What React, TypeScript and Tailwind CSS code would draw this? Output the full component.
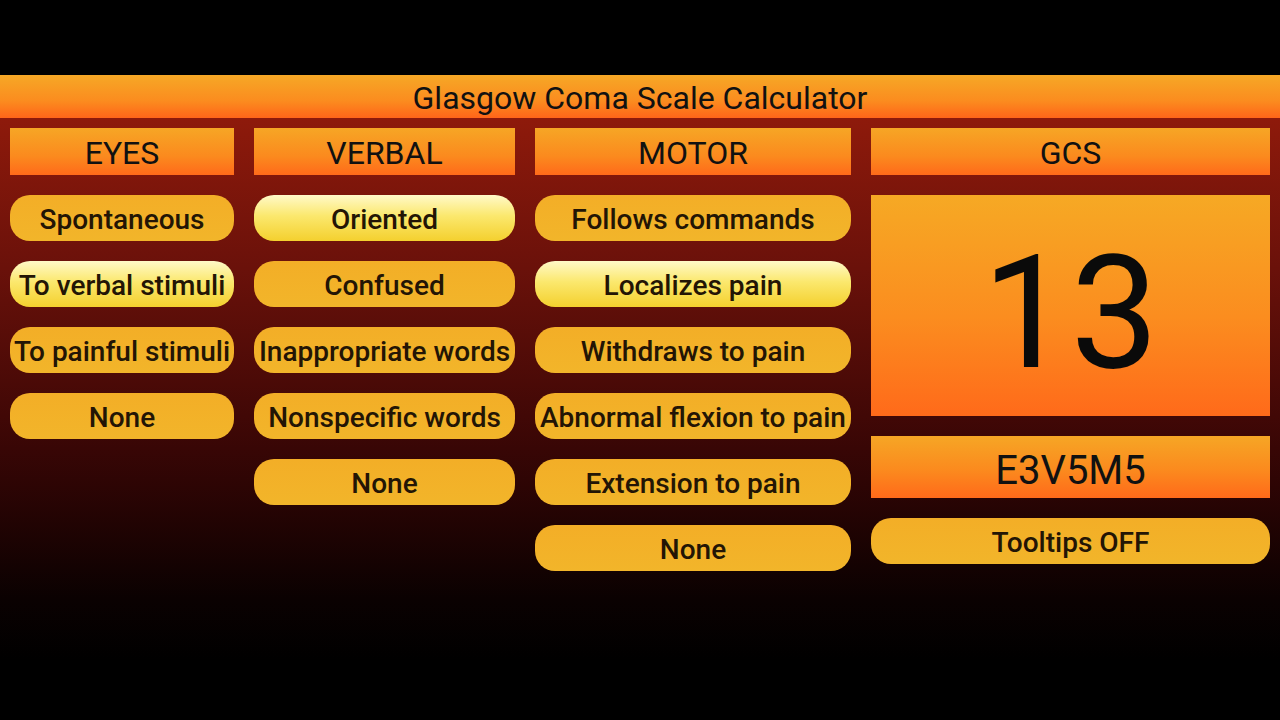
import React from "react";

const font = { fontFamily: "Roboto, 'Noto Sans', sans-serif" };

function Header({ children }: { children: React.ReactNode }) {
  return (
    <div className="h-[47px] flex items-center justify-center bg-[linear-gradient(to_bottom,#f6a625,#fb8a1e_60%,#ff6a1a)] text-[32px] text-[#111] leading-none pt-[2px]">
      {children}
    </div>
  );
}

function Btn({ label, selected }: { label: string; selected?: boolean }) {
  return (
    <div
      className={
        "h-[46px] rounded-[20px] flex items-center justify-center whitespace-nowrap text-[28px] font-medium text-[#231505] leading-none pt-[3px] " +
        (selected
          ? "bg-[linear-gradient(to_bottom,#fff9c8,#fbe86e_45%,#f4d02e)]"
          : "bg-[linear-gradient(to_bottom,#f3ae27,#f2b52a)]")
      }
    >
      {label}
    </div>
  );
}

export default function App() {
  const eyes = ["Spontaneous", "To verbal stimuli", "To painful stimuli", "None"];
  const verbal = ["Oriented", "Confused", "Inappropriate words", "Nonspecific words", "None"];
  const motor = [
    "Follows commands",
    "Localizes pain",
    "Withdraws to pain",
    "Abnormal flexion to pain",
    "Extension to pain",
    "None",
  ];
  return (
    <div className="w-[1280px] h-[720px] bg-black flex flex-col overflow-hidden" style={font}>
      <div className="h-[75px] shrink-0 bg-black" />
      <div className="h-[43px] shrink-0 flex items-center justify-center bg-[linear-gradient(to_bottom,#f6a826,#fb8c1f_60%,#ff6519)] text-[32px] text-[#111] leading-none pt-[2px]">
        Glasgow Coma Scale Calculator
      </div>
      <div className="flex-1 flex gap-[20px] px-[10px] pt-[10px] bg-[linear-gradient(to_bottom,#8e1a0b_0%,#6a110a_25%,#380605_55%,#0a0101_80%,#000_90%)]">
        <div className="w-[224px] flex flex-col gap-[20px]">
          <Header>EYES</Header>
          {eyes.map((e, i) => (
            <Btn key={e} label={e} selected={i === 1} />
          ))}
        </div>
        <div className="w-[261px] flex flex-col gap-[20px]">
          <Header>VERBAL</Header>
          {verbal.map((e, i) => (
            <Btn key={e} label={e} selected={i === 0} />
          ))}
        </div>
        <div className="w-[316px] flex flex-col gap-[20px]">
          <Header>MOTOR</Header>
          {motor.map((e, i) => (
            <Btn key={e} label={e} selected={i === 1} />
          ))}
        </div>
        <div className="w-[399px] flex flex-col gap-[20px]">
          <Header>GCS</Header>
          <div className="h-[221px] flex items-center justify-center bg-[linear-gradient(to_bottom,#f6a924,#fb8d1f_55%,#ff6a1a)] text-[157px] text-[#0a0a0a] leading-none pt-[16px]">
            13
          </div>
          <div className="h-[62px] flex items-center justify-center bg-[linear-gradient(to_bottom,#f6a625,#fb8a1e_55%,#ff6a1a)] text-[40px] text-[#111] leading-none pt-[7px]">
            E3V5M5
          </div>
          <Btn label="Tooltips OFF" />
        </div>
      </div>
    </div>
  );
}
